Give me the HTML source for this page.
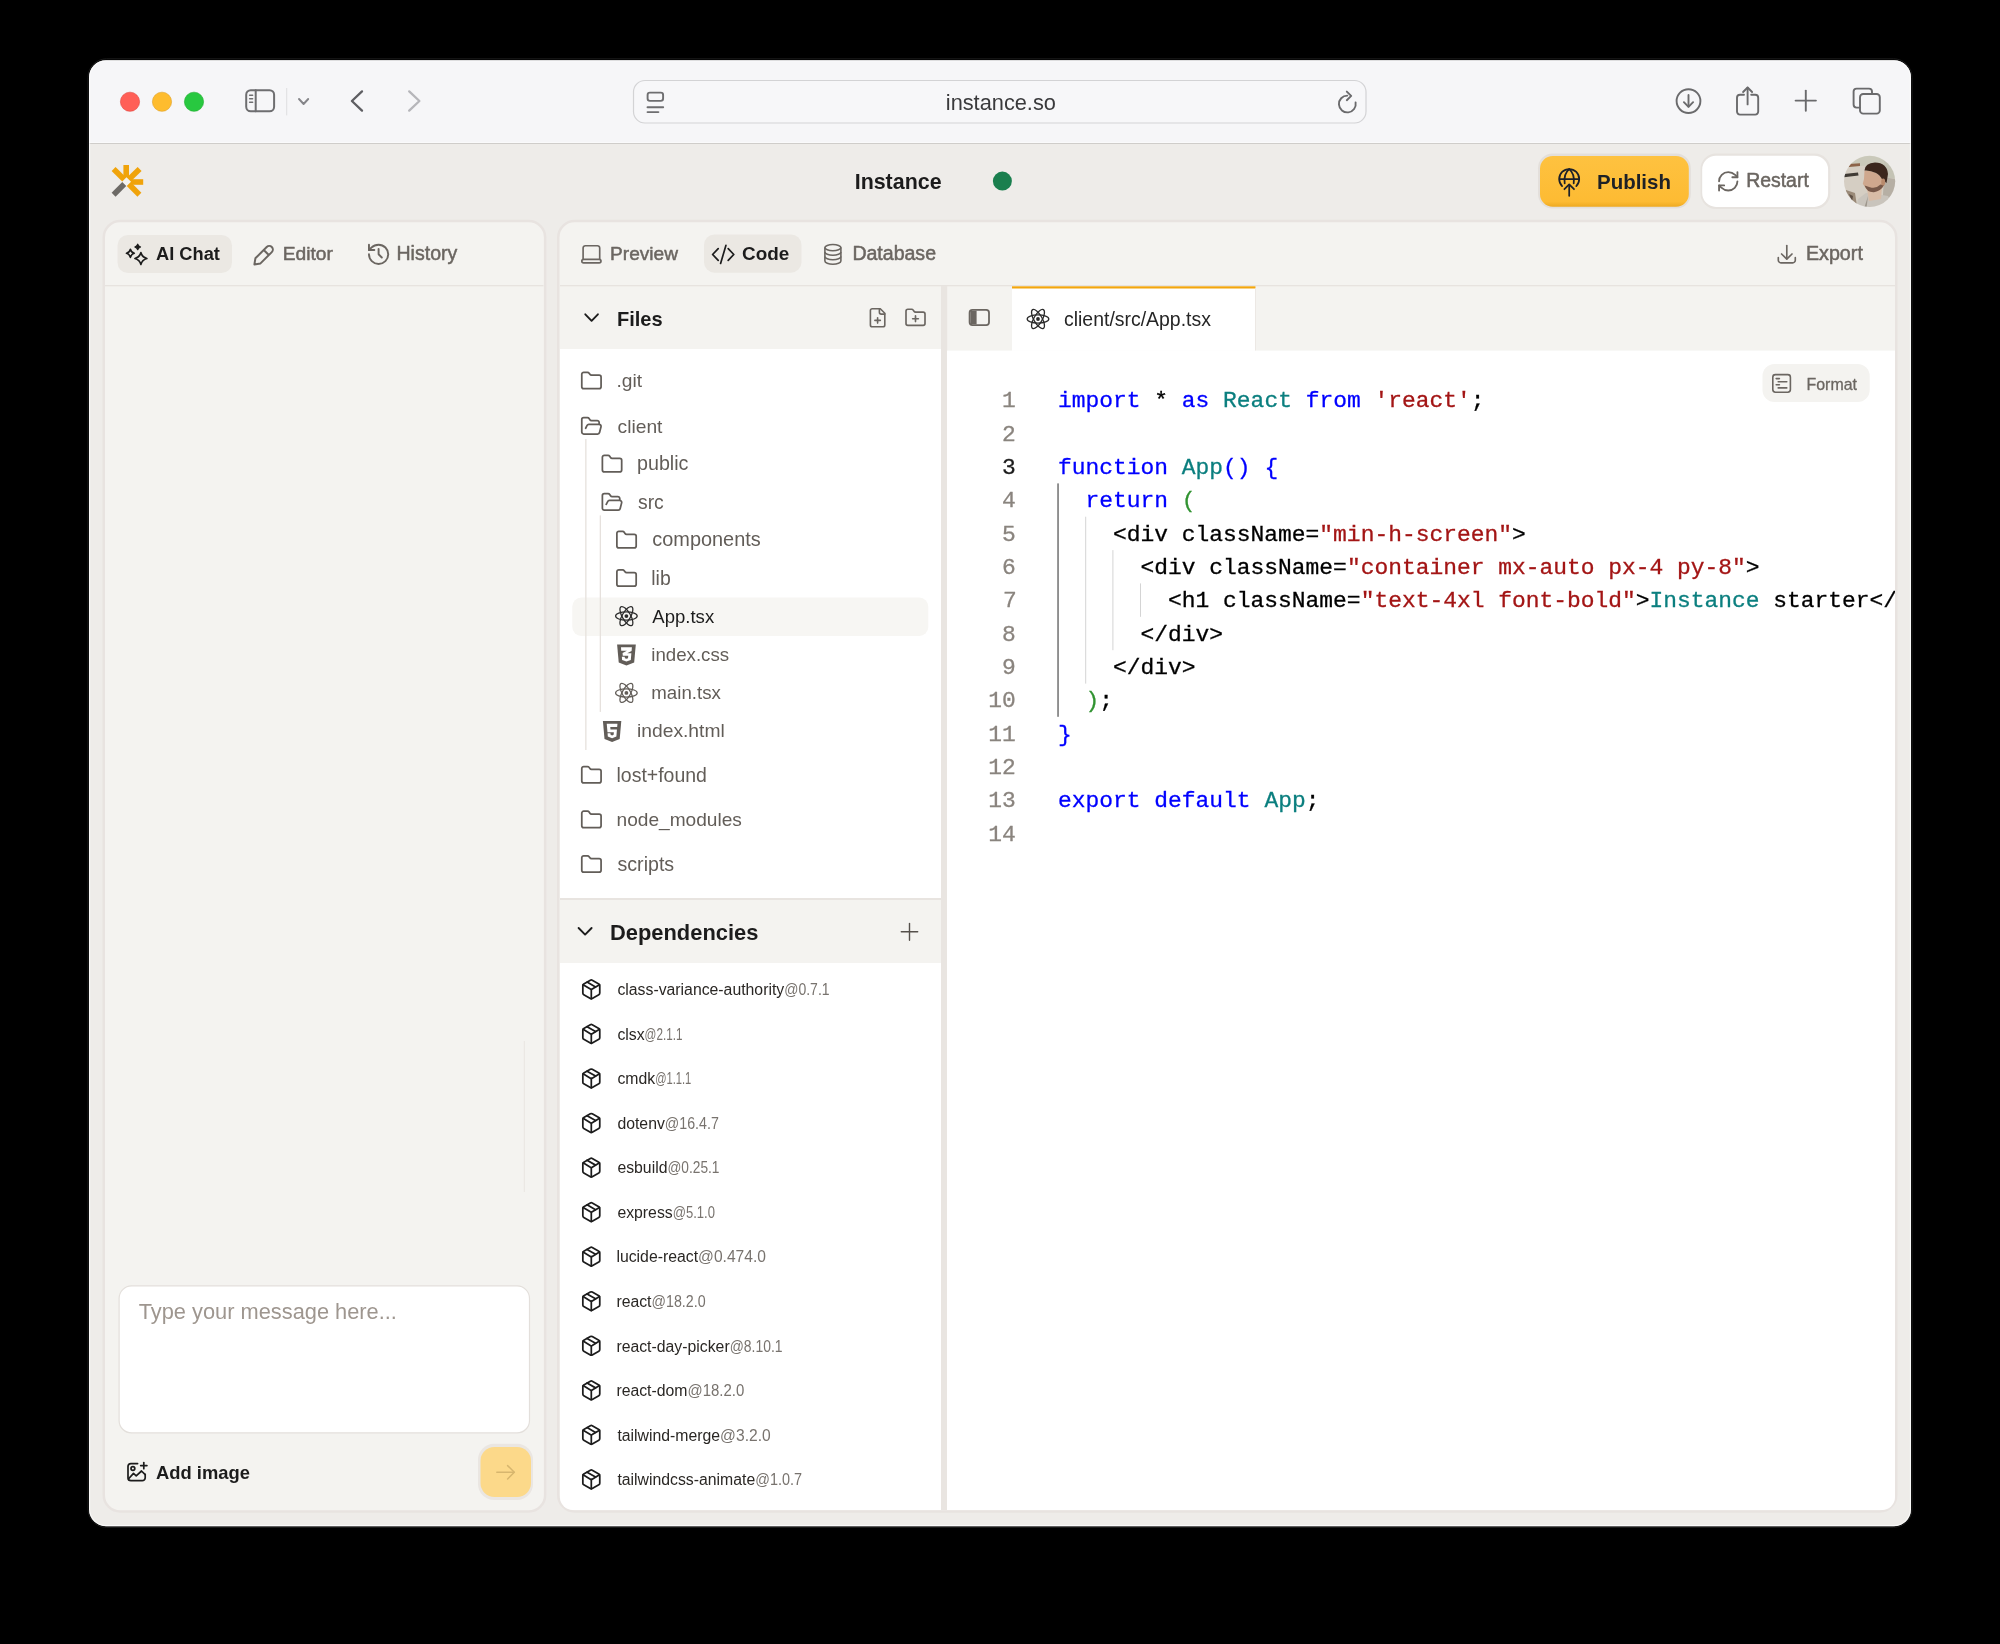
<!DOCTYPE html>
<html><head><meta charset="utf-8"><title>Instance</title>
<style>html,body{margin:0;padding:0;background:#000;width:2000px;height:1644px;overflow:hidden}svg{display:block;will-change:transform}text{white-space:pre}</style>
</head><body>
<svg width="2000" height="1644" viewBox="0 0 2000 1644">
<defs><clipPath id="win"><rect x="89" y="60.2" width="1822" height="1466" rx="17"/></clipPath><clipPath id="rp"><rect x="560" y="222" width="1335" height="1288" rx="13"/></clipPath><clipPath id="code"><rect x="947" y="351" width="948" height="1159"/></clipPath><clipPath id="av"><circle cx="1869.6" cy="181.3" r="25.6"/></clipPath><linearGradient id="pub" x1="0" y1="0" x2="0" y2="1"><stop offset="0" stop-color="#fec240"/><stop offset="0.9" stop-color="#fdbb33"/><stop offset="1" stop-color="#eeaa22"/></linearGradient></defs>
<rect x="88" y="58.8" width="1824" height="1468.6" rx="18.5" fill="none" stroke="#1c1c1c" stroke-width="1"/>
<g clip-path="url(#win)">
<rect x="89" y="59" width="1822" height="85" fill="#f6f6f8"/>
<rect x="89" y="142" width="1822" height="1" fill="#fafafb"/><rect x="89" y="143" width="1822" height="1" fill="#cfcdca"/>
<rect x="89" y="144" width="1822" height="1383" fill="#eeece9"/>
</g>
<rect x="89.6" y="60.8" width="1820.8" height="1464.8" rx="16.4" fill="none" stroke="#ffffff" stroke-opacity="0.7" stroke-width="1.1"/>
<circle cx="130" cy="101.75" r="9.6" fill="#ff5f57" stroke="#e14640" stroke-width="0.6"/>
<circle cx="162" cy="101.75" r="9.6" fill="#febc2e" stroke="#dfa023" stroke-width="0.6"/>
<circle cx="194" cy="101.75" r="9.6" fill="#28c840" stroke="#1dad2b" stroke-width="0.6"/>
<g fill="none" stroke="#6e6e70" stroke-width="2" stroke-linecap="round"><rect x="246.2" y="90.2" width="27.9" height="21.1" rx="4.5"/><line x1="255.7" y1="90.2" x2="255.7" y2="111.3"/></g>
<g stroke="#6e6e70" stroke-width="1.5" stroke-linecap="round"><line x1="249.6" y1="95.3" x2="252.6" y2="95.3"/><line x1="249.6" y1="98.8" x2="252.6" y2="98.8"/><line x1="249.6" y1="102.3" x2="252.6" y2="102.3"/></g>
<line x1="286.7" y1="88" x2="286.7" y2="115.4" stroke="#dedee0" stroke-width="1"/>
<polyline points="299,99 303.6,104 308.2,99" fill="none" stroke="#858589" stroke-width="1.9" stroke-linecap="round" stroke-linejoin="round"/>
<polyline points="362,91.4 351.9,101 362,110.6" fill="none" stroke="#5e5e62" stroke-width="2.3" stroke-linecap="round" stroke-linejoin="round"/>
<polyline points="409.2,91.4 419.4,101 409.2,110.6" fill="none" stroke="#b6b6ba" stroke-width="2.3" stroke-linecap="round" stroke-linejoin="round"/>
<rect x="633.5" y="80.5" width="732.5" height="42.5" rx="11.5" fill="#f7f7f9" stroke="#d3d3d5" stroke-width="1.2"/>
<g fill="none" stroke="#6e6e70" stroke-width="1.9" stroke-linecap="round"><rect x="647.6" y="92.6" width="15.5" height="8.3" rx="2.3"/><line x1="647.5" y1="107.2" x2="663.2" y2="107.2"/><line x1="647.5" y1="112.1" x2="658.4" y2="112.1"/></g>
<g fill="none" stroke="#6a6a6c" stroke-width="1.9" stroke-linecap="round" stroke-linejoin="round"><path d="M1347.3 95.6 A8.4 8.4 0 1 0 1355.6 102.5"/><polyline points="1346.8,91.6 1351.2,95.9 1346.8,100.2"/></g>
<g fill="none" stroke="#6a6a6c" stroke-width="1.9" stroke-linecap="round" stroke-linejoin="round"><circle cx="1688.5" cy="101.1" r="11.9"/><line x1="1688.5" y1="95" x2="1688.5" y2="106.6"/><polyline points="1683.9,102.2 1688.5,106.8 1693.1,102.2"/><path d="M1744 94.7 H1740 a3 3 0 0 0 -3 3 V111.6 a3 3 0 0 0 3 3 H1755.2 a3 3 0 0 0 3 -3 V97.7 a3 3 0 0 0 -3 -3 H1751.2"/><line x1="1747.6" y1="87.8" x2="1747.6" y2="104.4"/><polyline points="1743.1,92 1747.6,87.5 1752.1,92"/><line x1="1795.6" y1="100.6" x2="1815.9" y2="100.6"/><line x1="1805.8" y1="90.6" x2="1805.8" y2="110.7"/><path d="M1859.6 107.6 H1856.6 a3 3 0 0 1 -3 -3 V91.6 a3 3 0 0 1 3 -3 H1869 a3 3 0 0 1 3 3 V93.9"/><rect x="1860" y="94" width="19.8" height="19.6" rx="3.2"/></g>
<g stroke-width="5.6" stroke-linecap="butt"><line x1="126.2" y1="181.8" x2="126.2" y2="165" stroke="#f0a30a"/><line x1="126.5" y1="181.8" x2="113.6" y2="168.9" stroke="#f0a30a"/><line x1="126.5" y1="181.8" x2="139.6" y2="168.9" stroke="#f0a30a"/><line x1="126.5" y1="182" x2="143.2" y2="182" stroke="#f0a30a"/><line x1="126.5" y1="181.8" x2="139.4" y2="194.8" stroke="#f0a30a"/><line x1="126.5" y1="181.8" x2="113.6" y2="194.8" stroke="#6d6a66"/></g>
<rect x="123.3" y="178.6" width="6.4" height="6.4" fill="#f5f3ef" transform="rotate(45 126.5 181.8)"/>
<circle cx="1002.4" cy="181.1" r="9.5" fill="#1a7f4e"/>
<rect x="1538" y="153.5" width="152.8" height="55" rx="14.8" fill="#e3dfdb"/>
<rect x="1540" y="156" width="148.8" height="50.7" rx="12.8" fill="url(#pub)"/>
<g fill="none" stroke="#1d2129" stroke-width="1.75" stroke-linecap="round" stroke-linejoin="round"><path d="M1562.1 186.1 A10 10 0 1 1 1576.3 186.1"/><line x1="1559.6" y1="179" x2="1578.8" y2="179"/><path d="M1569.2 169.2 C1565.6 172.2 1563.9 177.2 1564.7 183.3"/><path d="M1569.2 169.2 C1572.8 172.2 1574.5 177.2 1573.7 183.3"/><line x1="1569.2" y1="185" x2="1569.2" y2="195.8"/><polyline points="1564.4,189.2 1569.2,184.4 1574,189.2"/></g>
<rect x="1700.5" y="153.5" width="129.8" height="55.5" rx="15.5" fill="#e7e3df"/>
<rect x="1702.2" y="155.7" width="125.9" height="51.2" rx="13.8" fill="#ffffff"/>
<g transform="translate(1716.01,169.06) scale(1.0200)" fill="none" stroke="#6b6661" stroke-width="1.8" stroke-linecap="round" stroke-linejoin="round" ><path d="M3 12a9 9 0 0 1 9-9 9.75 9.75 0 0 1 6.74 2.74L21 8"/><path d="M21 3v5h-5"/><path d="M21 12a9 9 0 0 1-9 9 9.75 9.75 0 0 1-6.74-2.74L3 16"/><path d="M8 16H3v5"/></g>
<filter id="blur1" x="-10%" y="-10%" width="120%" height="120%"><feGaussianBlur stdDeviation="0.45"/></filter>
<g clip-path="url(#av)"><g filter="url(#blur1)"><rect x="1840" y="150" width="60" height="60" fill="#d5cec3"/><path d="M1840 150 H1900 V167 Q1880 164 1860 166 L1840 168 Z" fill="#cac9ba"/><path d="M1884 160 L1900 160 L1900 180 L1885 177 Z" fill="#c4c3b4"/><path d="M1884 177 L1900 180 L1900 212 L1882 212 Z" fill="#b6afa4"/><path d="M1849 164 L1860 163.2 L1860 166 L1849 167 Z" fill="#8d6448"/><path d="M1844 174 L1858 172.6 L1858.5 175.6 L1844 177.2 Z" fill="#403a34"/><path d="M1846 190 L1855 193 L1857 206 L1846 206 Z" fill="#9a8a78"/><path d="M1849 194 L1853 196 L1852 202 Z" fill="#5e5044"/><path d="M1855 212 L1858 199 L1866 193 L1876 194 L1888 196 L1896 212 Z" fill="#c9c4bc"/><path d="M1868 196 L1866 212 L1863 212 Z" fill="#9d968c"/><path d="M1867 189 L1882 187 L1881 199 L1869 201 Z" fill="#d8bca6"/><path d="M1864.5 170.5 Q1870 170 1876 173 L1883 178 L1884.5 185 Q1881 191 1873 192 Q1867 192 1865 187 L1862.8 183.8 L1864 179 Z" fill="#cfa88e"/><path d="M1864.6 185.5 Q1867 192.5 1874 192.2 Q1881 191 1884 185 L1880.5 184.5 Q1876 189 1870 187.2 Z" fill="#765848"/><path d="M1864.5 170.5 Q1865 163 1875 162.6 Q1887 163 1888 174 L1886.5 183 L1882.5 180 Q1880 175 1876 173 Q1870 170 1864.5 170.5 Z" fill="#3b281e"/><ellipse cx="1883.2" cy="182" rx="2" ry="3.4" fill="#b88a6c"/></g></g>
<rect x="103.75" y="221" width="441.4" height="1290.4" rx="16.5" fill="#f4f3f0" stroke="#e8e3e0" stroke-width="2.5"/>
<rect x="105" y="285" width="438.5" height="1.3" fill="#e7e3df"/>
<rect x="117.5" y="235" width="114.5" height="38" rx="10.5" fill="#ebe8e3"/>
<g fill="none" stroke="#1c1c1c" stroke-width="1.6" stroke-linejoin="round"><path d="M140.9 252.5 Q142.1 257.3 146.9 258.5 Q142.1 259.7 140.9 264.5 Q139.70000000000002 259.7 134.9 258.5 Q139.70000000000002 257.3 140.9 252.5 Z"/><path d="M130.4 249.20000000000002 Q131.18 252.48000000000002 134.3 253.3 Q131.18 254.12 130.4 257.40000000000003 Q129.62 254.12 126.5 253.3 Q129.62 252.48000000000002 130.4 249.20000000000002 Z"/></g>
<path d="M137.7 244.1 Q138.42499999999998 246.20000000000002 140.6 246.9 Q138.42499999999998 247.6 137.7 249.70000000000002 Q136.975 247.6 134.79999999999998 246.9 Q136.975 246.20000000000002 137.7 244.1 Z" fill="#1c1c1c" stroke="#1c1c1c" stroke-width="1.1" stroke-linejoin="round"/>
<g transform="translate(254.4,264.4) rotate(-45)" fill="none" stroke="#6b6661" stroke-width="2" stroke-linejoin="round"><path d="M0 0 L5 -3.6 L21 -3.6 A3.6 3.6 0 0 1 21 3.6 L5 3.6 Z"/><line x1="16.8" y1="-3.6" x2="16.8" y2="3.6"/></g>
<g transform="translate(365.76,241.46) scale(1.0700)" fill="none" stroke="#6b6661" stroke-width="1.8" stroke-linecap="round" stroke-linejoin="round" ><path d="M3 12a9 9 0 1 0 9-9 9.75 9.75 0 0 0-6.74 2.74L3 8"/><path d="M3 3v5h5"/><path d="M12 7v5l3 3"/></g>
<line x1="524.3" y1="1041" x2="524.3" y2="1192" stroke="#e9e5e1" stroke-width="1"/>
<rect x="119.1" y="1285.9" width="410.4" height="147" rx="12.5" fill="#ffffff" stroke="#e3dfdb" stroke-width="1.2"/>
<g fill="none" stroke="#1c1c1c" stroke-width="1.7" stroke-linecap="round" stroke-linejoin="round"><path d="M137.6 1463.6 H131 a3 3 0 0 0 -3 3 V1477.7 a3 3 0 0 0 3 3 H142.2 a3 3 0 0 0 3 -3 V1474.3"/><line x1="140.7" y1="1465.6" x2="146.9" y2="1465.6"/><line x1="143.8" y1="1462.5" x2="143.8" y2="1468.7"/><circle cx="132.9" cy="1468.5" r="1.9"/><polyline points="128.6,1478.8 133.5,1473.4 136.2,1475.8 141.5,1471 145.2,1474.6"/></g>
<rect x="478" y="1443.8" width="55" height="56.2" rx="16" fill="#eae6e2"/>
<rect x="480.5" y="1447" width="50.5" height="50" rx="14" fill="#fcd98a"/>
<g fill="none" stroke="#d7b66e" stroke-width="1.5" stroke-linecap="round" stroke-linejoin="round"><line x1="496.8" y1="1472.3" x2="514.2" y2="1472.3"/><polyline points="507.6,1465.6 514.3,1472.3 507.6,1479"/></g>
<rect x="558.25" y="221" width="1338" height="1290.4" rx="16.5" fill="#f4f3f0" stroke="#e8e3e0" stroke-width="2.5"/>
<rect x="560" y="285" width="1335" height="1.3" fill="#e7e3df"/>
<rect x="704" y="234.5" width="97.5" height="38.2" rx="10.5" fill="#ebe8e3"/>
<g fill="none" stroke="#6b6661" stroke-width="1.65" stroke-linejoin="round" stroke-linecap="round"><path d="M583.1 259.3 V247.9 a2.2 2.2 0 0 1 2.2 -2.2 H597.5 a2.2 2.2 0 0 1 2.2 2.2 V259.3"/><rect x="581.8" y="259.3" width="19.2" height="3.6" rx="1.8"/></g>
<g fill="none" stroke="#1c1c1c" stroke-width="1.7" stroke-linecap="round" stroke-linejoin="round"><polyline points="718.2,248.6 712.6,254.5 718.2,260.4"/><polyline points="728.2,248.6 733.8,254.5 728.2,260.4"/><line x1="725.9" y1="245.4" x2="720.6" y2="263.5"/></g>
<g fill="none" stroke="#6b6661" stroke-width="1.6"><ellipse cx="832.9" cy="247.6" rx="8" ry="3.1"/><path d="M824.9 247.6 V261.1 A8 3.1 0 0 0 840.9 261.1 V247.6"/><path d="M824.9 252.1 A8 3.1 0 0 0 840.9 252.1"/><path d="M824.9 256.6 A8 3.1 0 0 0 840.9 256.6"/></g>
<g fill="none" stroke="#6b6661" stroke-width="1.65" stroke-linecap="round" stroke-linejoin="round"><line x1="1786.8" y1="245.6" x2="1786.8" y2="258.6"/><polyline points="1781.6,254 1786.8,259.2 1792,254"/><path d="M1778.3 257.6 V260.2 a2.6 2.6 0 0 0 2.6 2.6 H1792.7 a2.6 2.6 0 0 0 2.6 -2.6 V257.6"/></g>
<g clip-path="url(#rp)">
<rect x="560" y="349" width="381" height="550" fill="#ffffff"/>
<rect x="560" y="898" width="381" height="2" fill="#e8e4e0"/>
<rect x="560" y="963" width="381" height="560" fill="#ffffff"/>
<rect x="941" y="286" width="6.2" height="1240" fill="#e9e5e1"/>
<rect x="947" y="350.6" width="950" height="1170" fill="#ffffff"/>
</g>
<rect x="1012" y="286.3" width="243.5" height="64.5" fill="#ffffff"/>
<rect x="1012" y="286.3" width="243.5" height="2.2" fill="#f2a60f"/>
<rect x="1255" y="288.5" width="1" height="62" fill="#ece8e4"/>
<polyline points="585.3,314.3 591.6,320.8 597.9,314.3" fill="none" stroke="#1c1c1c" stroke-width="1.9" stroke-linecap="round" stroke-linejoin="round"/>
<g transform="translate(866.80,306.90) scale(0.9000)" fill="none" stroke="#6b6661" stroke-width="1.8" stroke-linecap="round" stroke-linejoin="round" ><path d="M15 2H6a2 2 0 0 0-2 2v16a2 2 0 0 0 2 2h12a2 2 0 0 0 2-2V7Z"/><path d="M14 2v4a2 2 0 0 0 2 2h4"/><path d="M9 15h6"/><path d="M12 18v-6"/></g>
<g transform="translate(904.10,306.40) scale(0.9500)" fill="none" stroke="#6b6661" stroke-width="1.75" stroke-linecap="round" stroke-linejoin="round" ><path d="M12 10v6"/><path d="M9 13h6"/><path d="M20 20a2 2 0 0 0 2-2V8a2 2 0 0 0-2-2h-7.9a2 2 0 0 1-1.69-.9L9.6 3.9A2 2 0 0 0 7.93 3H4a2 2 0 0 0-2 2v13a2 2 0 0 0 2 2Z"/></g>
<rect x="969.6" y="309.9" width="19.4" height="15.2" rx="2.8" fill="none" stroke="#6b6661" stroke-width="1.8"/>
<rect x="970.4" y="310.7" width="6.2" height="13.6" fill="#6b6661"/>
<g transform="translate(1038,319) scale(1.0)" fill="none" stroke="#2a2a2a" stroke-width="1.3"><ellipse rx="10.8" ry="4.1"/><ellipse rx="10.8" ry="4.1" transform="rotate(60)"/><ellipse rx="10.8" ry="4.1" transform="rotate(120)"/><circle r="1.9" fill="#2a2a2a" stroke="none"/></g>
<rect x="1762.5" y="364" width="107.2" height="38" rx="12" fill="#f4f3f0"/>
<g fill="none" stroke="#6b6661" stroke-width="1.6" stroke-linecap="round"><rect x="1772.8" y="374.6" width="17.6" height="17.6" rx="2.6"/><line x1="1776.2" y1="378.6" x2="1779.4" y2="378.6"/><line x1="1778.2" y1="381.7" x2="1786.8" y2="381.7"/><line x1="1776.2" y1="384.8" x2="1779.4" y2="384.8"/><line x1="1778.2" y1="387.9" x2="1786.8" y2="387.9"/></g>
<rect x="572.3" y="597.6" width="356" height="38.3" rx="9" fill="#f7f6f3"/>
<rect x="585.2" y="439" width="1.3" height="311" fill="#e6e1dd"/>
<rect x="599.7" y="515.4" width="1.3" height="196.5" fill="#e6e1dd"/>
<g transform="translate(579.85,369.42) scale(0.9650)" fill="none" stroke="#625d58" stroke-width="1.8134715025906736" stroke-linecap="round" stroke-linejoin="round" ><path d="M20 20a2 2 0 0 0 2-2V8a2 2 0 0 0-2-2h-7.9a2 2 0 0 1-1.69-.9L9.6 3.9A2 2 0 0 0 7.93 3H4a2 2 0 0 0-2 2v13a2 2 0 0 0 2 2Z"/></g>
<g transform="translate(579.85,414.72) scale(0.9650)" fill="none" stroke="#625d58" stroke-width="1.8134715025906736" stroke-linecap="round" stroke-linejoin="round" ><path d="m6 14 1.5-2.9A2 2 0 0 1 9.24 10H20a2 2 0 0 1 1.94 2.5l-1.54 6a2 2 0 0 1-1.95 1.5H4a2 2 0 0 1-2-2V5a2 2 0 0 1 2-2h3.9a2 2 0 0 1 1.69.9l.81 1.2a2 2 0 0 0 1.67.9H18a2 2 0 0 1 2 2v2"/></g>
<g transform="translate(600.45,452.52) scale(0.9650)" fill="none" stroke="#625d58" stroke-width="1.8134715025906736" stroke-linecap="round" stroke-linejoin="round" ><path d="M20 20a2 2 0 0 0 2-2V8a2 2 0 0 0-2-2h-7.9a2 2 0 0 1-1.69-.9L9.6 3.9A2 2 0 0 0 7.93 3H4a2 2 0 0 0-2 2v13a2 2 0 0 0 2 2Z"/></g>
<g transform="translate(600.45,490.82) scale(0.9650)" fill="none" stroke="#625d58" stroke-width="1.8134715025906736" stroke-linecap="round" stroke-linejoin="round" ><path d="m6 14 1.5-2.9A2 2 0 0 1 9.24 10H20a2 2 0 0 1 1.94 2.5l-1.54 6a2 2 0 0 1-1.95 1.5H4a2 2 0 0 1-2-2V5a2 2 0 0 1 2-2h3.9a2 2 0 0 1 1.69.9l.81 1.2a2 2 0 0 0 1.67.9H18a2 2 0 0 1 2 2v2"/></g>
<g transform="translate(614.95,528.52) scale(0.9650)" fill="none" stroke="#625d58" stroke-width="1.8134715025906736" stroke-linecap="round" stroke-linejoin="round" ><path d="M20 20a2 2 0 0 0 2-2V8a2 2 0 0 0-2-2h-7.9a2 2 0 0 1-1.69-.9L9.6 3.9A2 2 0 0 0 7.93 3H4a2 2 0 0 0-2 2v13a2 2 0 0 0 2 2Z"/></g>
<g transform="translate(614.95,566.92) scale(0.9650)" fill="none" stroke="#625d58" stroke-width="1.8134715025906736" stroke-linecap="round" stroke-linejoin="round" ><path d="M20 20a2 2 0 0 0 2-2V8a2 2 0 0 0-2-2h-7.9a2 2 0 0 1-1.69-.9L9.6 3.9A2 2 0 0 0 7.93 3H4a2 2 0 0 0-2 2v13a2 2 0 0 0 2 2Z"/></g>
<g transform="translate(626.4,616.1) scale(1.0)" fill="none" stroke="#2a2a2a" stroke-width="1.25"><ellipse rx="10.8" ry="4.1"/><ellipse rx="10.8" ry="4.1" transform="rotate(60)"/><ellipse rx="10.8" ry="4.1" transform="rotate(120)"/><circle r="1.9" fill="#2a2a2a" stroke="none"/></g>
<g transform="translate(617.1,644.4) scale(0.7791666666666667,0.7777777777777778)"><path d="M0 0 H24 L21.9 23.2 L12 27 L2.1 23.2 Z" fill="#625d58"/><path d="M5 3.6 H19 L18.6 8.4 L12.9 11.3 H18.3 L17.6 19.9 L12 22.1 L6.4 19.9 L6.1 15.9 H9.8 L10 17.7 L12 18.5 L14 17.7 L14.3 14.6 H7.3 L7 11.2 L12.6 8.2 H5.3 Z" fill="#ffffff"/></g>
<g transform="translate(626.4,692.9) scale(1.0)" fill="none" stroke="#625d58" stroke-width="1.25"><ellipse rx="10.8" ry="4.1"/><ellipse rx="10.8" ry="4.1" transform="rotate(60)"/><ellipse rx="10.8" ry="4.1" transform="rotate(120)"/><circle r="1.9" fill="#625d58" stroke="none"/></g>
<g transform="translate(602.9,721) scale(0.7666666666666666,0.7777777777777778)"><path d="M0 0 H24 L21.9 23.2 L12 27 L2.1 23.2 Z" fill="#625d58"/><path d="M5 3.6 H19 L18.6 7.6 H9.6 L9.9 11 H18.3 L17.6 19.9 L12 22.1 L6.4 19.9 L6.1 15.9 H9.8 L10 17.7 L12 18.5 L14 17.7 L14.3 14.4 H6 Z" fill="#ffffff"/></g>
<g transform="translate(579.85,763.62) scale(0.9650)" fill="none" stroke="#625d58" stroke-width="1.8134715025906736" stroke-linecap="round" stroke-linejoin="round" ><path d="M20 20a2 2 0 0 0 2-2V8a2 2 0 0 0-2-2h-7.9a2 2 0 0 1-1.69-.9L9.6 3.9A2 2 0 0 0 7.93 3H4a2 2 0 0 0-2 2v13a2 2 0 0 0 2 2Z"/></g>
<g transform="translate(579.85,808.32) scale(0.9650)" fill="none" stroke="#625d58" stroke-width="1.8134715025906736" stroke-linecap="round" stroke-linejoin="round" ><path d="M20 20a2 2 0 0 0 2-2V8a2 2 0 0 0-2-2h-7.9a2 2 0 0 1-1.69-.9L9.6 3.9A2 2 0 0 0 7.93 3H4a2 2 0 0 0-2 2v13a2 2 0 0 0 2 2Z"/></g>
<g transform="translate(579.85,852.92) scale(0.9650)" fill="none" stroke="#625d58" stroke-width="1.8134715025906736" stroke-linecap="round" stroke-linejoin="round" ><path d="M20 20a2 2 0 0 0 2-2V8a2 2 0 0 0-2-2h-7.9a2 2 0 0 1-1.69-.9L9.6 3.9A2 2 0 0 0 7.93 3H4a2 2 0 0 0-2 2v13a2 2 0 0 0 2 2Z"/></g>
<polyline points="578.6,928 585.1,934.6 591.6,928" fill="none" stroke="#1c1c1c" stroke-width="1.9" stroke-linecap="round" stroke-linejoin="round"/>
<g stroke="#55504b" stroke-width="1.4" stroke-linecap="round"><line x1="901.3" y1="931.8" x2="917.7" y2="931.8"/><line x1="909.5" y1="923.4" x2="909.5" y2="940.2"/></g>
<g transform="translate(580.02,978.07) scale(0.9400)" fill="none" stroke="#1c1c1c" stroke-width="1.85" stroke-linecap="round" stroke-linejoin="round" ><path d="M11 21.73a2 2 0 0 0 2 0l7-4A2 2 0 0 0 21 16V8a2 2 0 0 0-1-1.73l-7-4a2 2 0 0 0-2 0l-7 4A2 2 0 0 0 3 8v8a2 2 0 0 0 1 1.73z"/><path d="M12 22V12"/><path d="m3.3 7 7.703 4.734a2 2 0 0 0 1.994 0L20.7 7"/><path d="m7.5 4.27 9 5.15"/></g>
<g transform="translate(580.02,1022.62) scale(0.9400)" fill="none" stroke="#1c1c1c" stroke-width="1.85" stroke-linecap="round" stroke-linejoin="round" ><path d="M11 21.73a2 2 0 0 0 2 0l7-4A2 2 0 0 0 21 16V8a2 2 0 0 0-1-1.73l-7-4a2 2 0 0 0-2 0l-7 4A2 2 0 0 0 3 8v8a2 2 0 0 0 1 1.73z"/><path d="M12 22V12"/><path d="m3.3 7 7.703 4.734a2 2 0 0 0 1.994 0L20.7 7"/><path d="m7.5 4.27 9 5.15"/></g>
<g transform="translate(580.02,1067.17) scale(0.9400)" fill="none" stroke="#1c1c1c" stroke-width="1.85" stroke-linecap="round" stroke-linejoin="round" ><path d="M11 21.73a2 2 0 0 0 2 0l7-4A2 2 0 0 0 21 16V8a2 2 0 0 0-1-1.73l-7-4a2 2 0 0 0-2 0l-7 4A2 2 0 0 0 3 8v8a2 2 0 0 0 1 1.73z"/><path d="M12 22V12"/><path d="m3.3 7 7.703 4.734a2 2 0 0 0 1.994 0L20.7 7"/><path d="m7.5 4.27 9 5.15"/></g>
<g transform="translate(580.02,1111.72) scale(0.9400)" fill="none" stroke="#1c1c1c" stroke-width="1.85" stroke-linecap="round" stroke-linejoin="round" ><path d="M11 21.73a2 2 0 0 0 2 0l7-4A2 2 0 0 0 21 16V8a2 2 0 0 0-1-1.73l-7-4a2 2 0 0 0-2 0l-7 4A2 2 0 0 0 3 8v8a2 2 0 0 0 1 1.73z"/><path d="M12 22V12"/><path d="m3.3 7 7.703 4.734a2 2 0 0 0 1.994 0L20.7 7"/><path d="m7.5 4.27 9 5.15"/></g>
<g transform="translate(580.02,1156.27) scale(0.9400)" fill="none" stroke="#1c1c1c" stroke-width="1.85" stroke-linecap="round" stroke-linejoin="round" ><path d="M11 21.73a2 2 0 0 0 2 0l7-4A2 2 0 0 0 21 16V8a2 2 0 0 0-1-1.73l-7-4a2 2 0 0 0-2 0l-7 4A2 2 0 0 0 3 8v8a2 2 0 0 0 1 1.73z"/><path d="M12 22V12"/><path d="m3.3 7 7.703 4.734a2 2 0 0 0 1.994 0L20.7 7"/><path d="m7.5 4.27 9 5.15"/></g>
<g transform="translate(580.02,1200.82) scale(0.9400)" fill="none" stroke="#1c1c1c" stroke-width="1.85" stroke-linecap="round" stroke-linejoin="round" ><path d="M11 21.73a2 2 0 0 0 2 0l7-4A2 2 0 0 0 21 16V8a2 2 0 0 0-1-1.73l-7-4a2 2 0 0 0-2 0l-7 4A2 2 0 0 0 3 8v8a2 2 0 0 0 1 1.73z"/><path d="M12 22V12"/><path d="m3.3 7 7.703 4.734a2 2 0 0 0 1.994 0L20.7 7"/><path d="m7.5 4.27 9 5.15"/></g>
<g transform="translate(580.02,1245.37) scale(0.9400)" fill="none" stroke="#1c1c1c" stroke-width="1.85" stroke-linecap="round" stroke-linejoin="round" ><path d="M11 21.73a2 2 0 0 0 2 0l7-4A2 2 0 0 0 21 16V8a2 2 0 0 0-1-1.73l-7-4a2 2 0 0 0-2 0l-7 4A2 2 0 0 0 3 8v8a2 2 0 0 0 1 1.73z"/><path d="M12 22V12"/><path d="m3.3 7 7.703 4.734a2 2 0 0 0 1.994 0L20.7 7"/><path d="m7.5 4.27 9 5.15"/></g>
<g transform="translate(580.02,1289.92) scale(0.9400)" fill="none" stroke="#1c1c1c" stroke-width="1.85" stroke-linecap="round" stroke-linejoin="round" ><path d="M11 21.73a2 2 0 0 0 2 0l7-4A2 2 0 0 0 21 16V8a2 2 0 0 0-1-1.73l-7-4a2 2 0 0 0-2 0l-7 4A2 2 0 0 0 3 8v8a2 2 0 0 0 1 1.73z"/><path d="M12 22V12"/><path d="m3.3 7 7.703 4.734a2 2 0 0 0 1.994 0L20.7 7"/><path d="m7.5 4.27 9 5.15"/></g>
<g transform="translate(580.02,1334.47) scale(0.9400)" fill="none" stroke="#1c1c1c" stroke-width="1.85" stroke-linecap="round" stroke-linejoin="round" ><path d="M11 21.73a2 2 0 0 0 2 0l7-4A2 2 0 0 0 21 16V8a2 2 0 0 0-1-1.73l-7-4a2 2 0 0 0-2 0l-7 4A2 2 0 0 0 3 8v8a2 2 0 0 0 1 1.73z"/><path d="M12 22V12"/><path d="m3.3 7 7.703 4.734a2 2 0 0 0 1.994 0L20.7 7"/><path d="m7.5 4.27 9 5.15"/></g>
<g transform="translate(580.02,1379.02) scale(0.9400)" fill="none" stroke="#1c1c1c" stroke-width="1.85" stroke-linecap="round" stroke-linejoin="round" ><path d="M11 21.73a2 2 0 0 0 2 0l7-4A2 2 0 0 0 21 16V8a2 2 0 0 0-1-1.73l-7-4a2 2 0 0 0-2 0l-7 4A2 2 0 0 0 3 8v8a2 2 0 0 0 1 1.73z"/><path d="M12 22V12"/><path d="m3.3 7 7.703 4.734a2 2 0 0 0 1.994 0L20.7 7"/><path d="m7.5 4.27 9 5.15"/></g>
<g transform="translate(580.02,1423.57) scale(0.9400)" fill="none" stroke="#1c1c1c" stroke-width="1.85" stroke-linecap="round" stroke-linejoin="round" ><path d="M11 21.73a2 2 0 0 0 2 0l7-4A2 2 0 0 0 21 16V8a2 2 0 0 0-1-1.73l-7-4a2 2 0 0 0-2 0l-7 4A2 2 0 0 0 3 8v8a2 2 0 0 0 1 1.73z"/><path d="M12 22V12"/><path d="m3.3 7 7.703 4.734a2 2 0 0 0 1.994 0L20.7 7"/><path d="m7.5 4.27 9 5.15"/></g>
<g transform="translate(580.02,1468.12) scale(0.9400)" fill="none" stroke="#1c1c1c" stroke-width="1.85" stroke-linecap="round" stroke-linejoin="round" ><path d="M11 21.73a2 2 0 0 0 2 0l7-4A2 2 0 0 0 21 16V8a2 2 0 0 0-1-1.73l-7-4a2 2 0 0 0-2 0l-7 4A2 2 0 0 0 3 8v8a2 2 0 0 0 1 1.73z"/><path d="M12 22V12"/><path d="m3.3 7 7.703 4.734a2 2 0 0 0 1.994 0L20.7 7"/><path d="m7.5 4.27 9 5.15"/></g>
<rect x="1057.1" y="483.4" width="1.9" height="233.4" fill="#8e8e8e"/>
<rect x="1085.2" y="516.7" width="1" height="166.9" fill="#d4d4d4"/>
<rect x="1112.4" y="550.1" width="1" height="100.1" fill="#d4d4d4"/>
<rect x="1140" y="583.4" width="1" height="33.4" fill="#d4d4d4"/>
<text x="945.80" y="109.60" font-family="Liberation Sans" font-size="21.78" font-weight="normal" fill="#3a3a3c">instance.so</text>
<text x="854.70" y="188.70" font-family="Liberation Sans" font-size="21.41" font-weight="bold" fill="#1c1c1c">Instance</text>
<text x="1597.00" y="189.20" font-family="Liberation Sans" font-size="20.48" font-weight="bold" fill="#1e2126">Publish</text>
<text x="1746.20" y="187.00" font-family="Liberation Sans" font-size="19.43" font-weight="normal" fill="#6b6661" stroke="#6b6661" stroke-width="0.5" stroke-linejoin="round">Restart</text>
<text x="156.00" y="260.00" font-family="Liberation Sans" font-size="18.26" font-weight="bold" fill="#1c1c1c">AI Chat</text>
<text x="282.70" y="260.10" font-family="Liberation Sans" font-size="19.21" font-weight="normal" fill="#6b6661" stroke="#6b6661" stroke-width="0.5" stroke-linejoin="round">Editor</text>
<text x="396.50" y="260.10" font-family="Liberation Sans" font-size="19.56" font-weight="normal" fill="#6b6661" stroke="#6b6661" stroke-width="0.5" stroke-linejoin="round">History</text>
<text x="138.70" y="1319.40" font-family="Liberation Sans" font-size="21.82" font-weight="normal" fill="#9e968f">Type your message here...</text>
<text x="156.00" y="1478.60" font-family="Liberation Sans" font-size="18.36" font-weight="bold" fill="#1c1c1c">Add image</text>
<text x="610.10" y="259.80" font-family="Liberation Sans" font-size="19.08" font-weight="normal" fill="#6b6661" stroke="#6b6661" stroke-width="0.5" stroke-linejoin="round">Preview</text>
<text x="742.00" y="259.80" font-family="Liberation Sans" font-size="18.9" font-weight="bold" fill="#1c1c1c">Code</text>
<text x="852.40" y="259.70" font-family="Liberation Sans" font-size="19.55" font-weight="normal" fill="#6b6661" stroke="#6b6661" stroke-width="0.5" stroke-linejoin="round">Database</text>
<text x="1805.90" y="259.70" font-family="Liberation Sans" font-size="19.73" font-weight="normal" fill="#6b6661" stroke="#6b6661" stroke-width="0.5" stroke-linejoin="round">Export</text>
<text x="616.90" y="326.00" font-family="Liberation Sans" font-size="20.07" font-weight="bold" fill="#1c1c1c">Files</text>
<text x="1064.00" y="326.20" font-family="Liberation Sans" font-size="19.45" font-weight="normal" fill="#262626">client/src/App.tsx</text>
<text x="1806.50" y="390.00" font-family="Liberation Sans" font-size="15.93" font-weight="normal" fill="#6b6661" stroke="#6b6661" stroke-width="0.3" stroke-linejoin="round">Format</text>
<text x="616.40" y="387.30" font-family="Liberation Sans" font-size="19.18" font-weight="normal" fill="#625d58">.git</text>
<text x="617.50" y="432.60" font-family="Liberation Sans" font-size="19.25" font-weight="normal" fill="#625d58">client</text>
<text x="637.00" y="470.40" font-family="Liberation Sans" font-size="19.7" font-weight="normal" fill="#625d58">public</text>
<text x="638.00" y="508.70" font-family="Liberation Sans" font-size="19.33" font-weight="normal" fill="#625d58">src</text>
<text x="652.30" y="546.40" font-family="Liberation Sans" font-size="19.92" font-weight="normal" fill="#625d58">components</text>
<text x="651.30" y="584.80" font-family="Liberation Sans" font-size="19.46" font-weight="normal" fill="#625d58">lib</text>
<text x="652.30" y="622.50" font-family="Liberation Sans" font-size="18.56" font-weight="normal" fill="#1c1c1c">App.tsx</text>
<text x="651.30" y="660.60" font-family="Liberation Sans" font-size="18.68" font-weight="normal" fill="#625d58">index.css</text>
<text x="651.30" y="699.30" font-family="Liberation Sans" font-size="18.7" font-weight="normal" fill="#625d58">main.tsx</text>
<text x="637.00" y="737.20" font-family="Liberation Sans" font-size="19.25" font-weight="normal" fill="#625d58">index.html</text>
<text x="616.50" y="781.50" font-family="Liberation Sans" font-size="19.49" font-weight="normal" fill="#625d58">lost+found</text>
<text x="616.50" y="826.20" font-family="Liberation Sans" font-size="19.13" font-weight="normal" fill="#625d58">node_modules</text>
<text x="617.50" y="870.80" font-family="Liberation Sans" font-size="19.62" font-weight="normal" fill="#625d58">scripts</text>
<text x="610.00" y="939.80" font-family="Liberation Sans" font-size="21.89" font-weight="bold" fill="#1c1c1c">Dependencies</text>
<text x="1002.00" y="407.30" font-family="Liberation Mono" font-size="22.93" font-weight="normal" fill="#8a847e" stroke="#8a847e" stroke-width="0.3" stroke-linejoin="round">1</text>
<text x="1002.00" y="440.64" font-family="Liberation Mono" font-size="22.93" font-weight="normal" fill="#8a847e" stroke="#8a847e" stroke-width="0.3" stroke-linejoin="round">2</text>
<text x="1002.00" y="473.98" font-family="Liberation Mono" font-size="22.93" font-weight="normal" fill="#1c1c1c" stroke="#1c1c1c" stroke-width="0.3" stroke-linejoin="round">3</text>
<text x="1002.00" y="507.32" font-family="Liberation Mono" font-size="22.93" font-weight="normal" fill="#8a847e" stroke="#8a847e" stroke-width="0.3" stroke-linejoin="round">4</text>
<text x="1002.00" y="540.66" font-family="Liberation Mono" font-size="22.93" font-weight="normal" fill="#8a847e" stroke="#8a847e" stroke-width="0.3" stroke-linejoin="round">5</text>
<text x="1002.00" y="574.00" font-family="Liberation Mono" font-size="22.93" font-weight="normal" fill="#8a847e" stroke="#8a847e" stroke-width="0.3" stroke-linejoin="round">6</text>
<text x="1003.00" y="607.34" font-family="Liberation Mono" font-size="22.93" font-weight="normal" fill="#8a847e" stroke="#8a847e" stroke-width="0.3" stroke-linejoin="round">7</text>
<text x="1002.00" y="640.68" font-family="Liberation Mono" font-size="22.93" font-weight="normal" fill="#8a847e" stroke="#8a847e" stroke-width="0.3" stroke-linejoin="round">8</text>
<text x="1002.00" y="674.02" font-family="Liberation Mono" font-size="22.93" font-weight="normal" fill="#8a847e" stroke="#8a847e" stroke-width="0.3" stroke-linejoin="round">9</text>
<text x="988.24" y="707.36" font-family="Liberation Mono" font-size="22.93" font-weight="normal" fill="#8a847e" stroke="#8a847e" stroke-width="0.3" stroke-linejoin="round">10</text>
<text x="988.24" y="740.70" font-family="Liberation Mono" font-size="22.93" font-weight="normal" fill="#8a847e" stroke="#8a847e" stroke-width="0.3" stroke-linejoin="round">11</text>
<text x="988.24" y="774.04" font-family="Liberation Mono" font-size="22.93" font-weight="normal" fill="#8a847e" stroke="#8a847e" stroke-width="0.3" stroke-linejoin="round">12</text>
<text x="988.24" y="807.38" font-family="Liberation Mono" font-size="22.93" font-weight="normal" fill="#8a847e" stroke="#8a847e" stroke-width="0.3" stroke-linejoin="round">13</text>
<text x="988.24" y="840.72" font-family="Liberation Mono" font-size="22.93" font-weight="normal" fill="#8a847e" stroke="#8a847e" stroke-width="0.3" stroke-linejoin="round">14</text>
<g clip-path="url(#code)">
<text x="1058" y="407.30" font-family="Liberation Mono" font-size="22.93" stroke-width="0.3" xml:space="preserve"><tspan fill="#0000ff" stroke="#0000ff">import</tspan><tspan fill="#000000" stroke="#000000"> * </tspan><tspan fill="#0000ff" stroke="#0000ff">as</tspan><tspan fill="#000000" stroke="#000000"> </tspan><tspan fill="#0b7f7f" stroke="#0b7f7f">React</tspan><tspan fill="#000000" stroke="#000000"> </tspan><tspan fill="#0000ff" stroke="#0000ff">from</tspan><tspan fill="#000000" stroke="#000000"> </tspan><tspan fill="#a31515" stroke="#a31515">'react'</tspan><tspan fill="#000000" stroke="#000000">;</tspan></text>
<text x="1058" y="473.98" font-family="Liberation Mono" font-size="22.93" stroke-width="0.3" xml:space="preserve"><tspan fill="#0000ff" stroke="#0000ff">function</tspan><tspan fill="#000000" stroke="#000000"> </tspan><tspan fill="#0b7f7f" stroke="#0b7f7f">App</tspan><tspan fill="#0000ff" stroke="#0000ff">()</tspan><tspan fill="#000000" stroke="#000000"> </tspan><tspan fill="#0000ff" stroke="#0000ff">{</tspan></text>
<text x="1058" y="507.32" font-family="Liberation Mono" font-size="22.93" stroke-width="0.3" xml:space="preserve"><tspan fill="#000000" stroke="#000000">  </tspan><tspan fill="#0000ff" stroke="#0000ff">return</tspan><tspan fill="#000000" stroke="#000000"> </tspan><tspan fill="#319331" stroke="#319331">(</tspan></text>
<text x="1058" y="540.66" font-family="Liberation Mono" font-size="22.93" stroke-width="0.3" xml:space="preserve"><tspan fill="#000000" stroke="#000000">    &lt;div className=</tspan><tspan fill="#a31515" stroke="#a31515">&quot;min-h-screen&quot;</tspan><tspan fill="#000000" stroke="#000000">&gt;</tspan></text>
<text x="1058" y="574.00" font-family="Liberation Mono" font-size="22.93" stroke-width="0.3" xml:space="preserve"><tspan fill="#000000" stroke="#000000">      &lt;div className=</tspan><tspan fill="#a31515" stroke="#a31515">&quot;container mx-auto px-4 py-8&quot;</tspan><tspan fill="#000000" stroke="#000000">&gt;</tspan></text>
<text x="1058" y="607.34" font-family="Liberation Mono" font-size="22.93" stroke-width="0.3" xml:space="preserve"><tspan fill="#000000" stroke="#000000">        &lt;h1 className=</tspan><tspan fill="#a31515" stroke="#a31515">&quot;text-4xl font-bold&quot;</tspan><tspan fill="#000000" stroke="#000000">&gt;</tspan><tspan fill="#0b7f7f" stroke="#0b7f7f">Instance</tspan><tspan fill="#000000" stroke="#000000"> starter&lt;/h1&gt;</tspan></text>
<text x="1058" y="640.68" font-family="Liberation Mono" font-size="22.93" stroke-width="0.3" xml:space="preserve"><tspan fill="#000000" stroke="#000000">      &lt;/div&gt;</tspan></text>
<text x="1058" y="674.02" font-family="Liberation Mono" font-size="22.93" stroke-width="0.3" xml:space="preserve"><tspan fill="#000000" stroke="#000000">    &lt;/div&gt;</tspan></text>
<text x="1058" y="707.36" font-family="Liberation Mono" font-size="22.93" stroke-width="0.3" xml:space="preserve"><tspan fill="#000000" stroke="#000000">  </tspan><tspan fill="#319331" stroke="#319331">)</tspan><tspan fill="#000000" stroke="#000000">;</tspan></text>
<text x="1058" y="740.70" font-family="Liberation Mono" font-size="22.93" stroke-width="0.3" xml:space="preserve"><tspan fill="#0000ff" stroke="#0000ff">}</tspan></text>
<text x="1058" y="807.38" font-family="Liberation Mono" font-size="22.93" stroke-width="0.3" xml:space="preserve"><tspan fill="#0000ff" stroke="#0000ff">export</tspan><tspan fill="#000000" stroke="#000000"> </tspan><tspan fill="#0000ff" stroke="#0000ff">default</tspan><tspan fill="#000000" stroke="#000000"> </tspan><tspan fill="#0b7f7f" stroke="#0b7f7f">App</tspan><tspan fill="#000000" stroke="#000000">;</tspan></text>
</g>
<text x="617.40" y="995.10" font-family="Liberation Sans" font-size="15.8" fill="#2a2724" xml:space="preserve">class-variance-authority</text>
<text x="784.21" y="995.10" font-family="Liberation Sans" font-size="15.8" fill="#78736e" textLength="45.40" lengthAdjust="spacingAndGlyphs">@0.7.1</text>
<text x="617.40" y="1039.65" font-family="Liberation Sans" font-size="15.8" fill="#2a2724" xml:space="preserve">clsx</text>
<text x="644.60" y="1039.65" font-family="Liberation Sans" font-size="15.8" fill="#78736e" textLength="37.84" lengthAdjust="spacingAndGlyphs">@2.1.1</text>
<text x="617.40" y="1084.20" font-family="Liberation Sans" font-size="15.8" fill="#2a2724" xml:space="preserve">cmdk</text>
<text x="655.14" y="1084.20" font-family="Liberation Sans" font-size="15.8" fill="#78736e" textLength="36.21" lengthAdjust="spacingAndGlyphs">@1.1.1</text>
<text x="617.40" y="1128.75" font-family="Liberation Sans" font-size="15.8" fill="#2a2724" xml:space="preserve">dotenv</text>
<text x="664.83" y="1128.75" font-family="Liberation Sans" font-size="15.8" fill="#78736e" textLength="53.98" lengthAdjust="spacingAndGlyphs">@16.4.7</text>
<text x="617.40" y="1173.30" font-family="Liberation Sans" font-size="15.8" fill="#2a2724" xml:space="preserve">esbuild</text>
<text x="667.46" y="1173.30" font-family="Liberation Sans" font-size="15.8" fill="#78736e" textLength="52.05" lengthAdjust="spacingAndGlyphs">@0.25.1</text>
<text x="617.40" y="1217.85" font-family="Liberation Sans" font-size="15.8" fill="#2a2724" xml:space="preserve">express</text>
<text x="672.71" y="1217.85" font-family="Liberation Sans" font-size="15.8" fill="#78736e" textLength="42.21" lengthAdjust="spacingAndGlyphs">@5.1.0</text>
<text x="616.40" y="1262.40" font-family="Liberation Sans" font-size="15.8" fill="#2a2724" xml:space="preserve">lucide-react</text>
<text x="698.05" y="1262.40" font-family="Liberation Sans" font-size="15.8" fill="#78736e" textLength="67.93" lengthAdjust="spacingAndGlyphs">@0.474.0</text>
<text x="616.40" y="1306.95" font-family="Liberation Sans" font-size="15.8" fill="#2a2724" xml:space="preserve">react</text>
<text x="651.52" y="1306.95" font-family="Liberation Sans" font-size="15.8" fill="#78736e" textLength="54.09" lengthAdjust="spacingAndGlyphs">@18.2.0</text>
<text x="616.40" y="1351.50" font-family="Liberation Sans" font-size="15.8" fill="#2a2724" xml:space="preserve">react-day-picker</text>
<text x="729.65" y="1351.50" font-family="Liberation Sans" font-size="15.8" fill="#78736e" textLength="52.86" lengthAdjust="spacingAndGlyphs">@8.10.1</text>
<text x="616.40" y="1396.05" font-family="Liberation Sans" font-size="15.8" fill="#2a2724" xml:space="preserve">react-dom</text>
<text x="687.51" y="1396.05" font-family="Liberation Sans" font-size="15.8" fill="#78736e" textLength="56.79" lengthAdjust="spacingAndGlyphs">@18.2.0</text>
<text x="617.40" y="1440.60" font-family="Liberation Sans" font-size="15.8" fill="#2a2724" xml:space="preserve">tailwind-merge</text>
<text x="720.12" y="1440.60" font-family="Liberation Sans" font-size="15.8" fill="#78736e" textLength="50.57" lengthAdjust="spacingAndGlyphs">@3.2.0</text>
<text x="617.40" y="1485.15" font-family="Liberation Sans" font-size="15.8" fill="#2a2724" xml:space="preserve">tailwindcss-animate</text>
<text x="755.24" y="1485.15" font-family="Liberation Sans" font-size="15.8" fill="#78736e" textLength="46.78" lengthAdjust="spacingAndGlyphs">@1.0.7</text>
</svg>
</body></html>
